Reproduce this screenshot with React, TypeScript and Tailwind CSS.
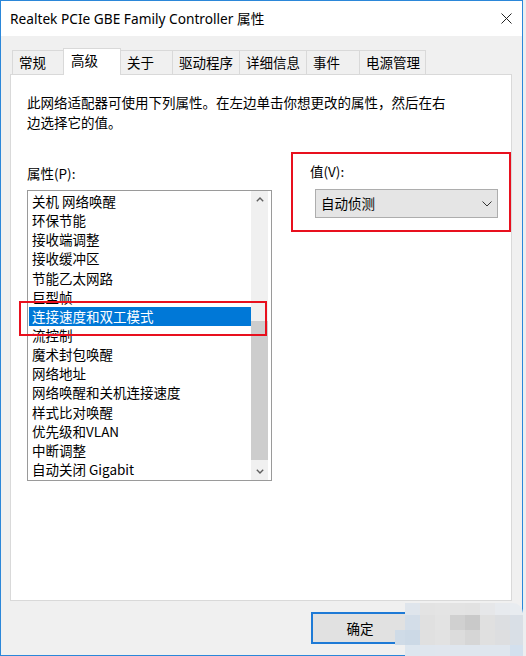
import React from "react";

const items = [
  "关机 网络唤醒",
  "环保节能",
  "接收端调整",
  "接收缓冲区",
  "节能乙太网路",
  "巨型帧",
  "连接速度和双工模式",
  "流控制",
  "魔术封包唤醒",
  "网络地址",
  "网络唤醒和关机连接速度",
  "样式比对唤醒",
  "优先级和VLAN",
  "中断调整",
  "自动关闭 Gigabit",
];

// tabs: label, width, left padding
const tabs = [
  { label: "常规", w: "w-[51px]" },
  { label: "高级", w: "w-[58px]", active: true },
  { label: "关于", w: "w-[51px]" },
  { label: "驱动程序", w: "w-[67px]" },
  { label: "详细信息", w: "w-[67px]" },
  { label: "事件", w: "w-[53px]" },
  { label: "电源管理", w: "w-[67px]", last: true },
];

// mosaic that hides the second button
const mosaic = [
  { h: "h-[12px]", cells: ["bg-transparent", "bg-[#dfe5ec]", "bg-[#e3e3e3]", "bg-[#e4e4e4]", "bg-[#e3e3e3]", "bg-[#e2e2e2]", "bg-[#e6e7e9]", "bg-[#e7eaee]", "bg-[#e8ecf0]"] },
  { h: "h-[15px]", cells: ["bg-transparent", "bg-[#d3dde8]", "bg-[#e0e0e0]", "bg-[#e3e3e3]", "bg-[#d0d0d0]", "bg-[#c9c9c9]", "bg-[#e0e0e0]", "bg-[#dcdee1]", "bg-[#d9dfe6]"] },
  { h: "h-[15px]", cells: ["bg-[#cfdbe7]", "bg-[#ccd9e6]", "bg-[#e0e0e0]", "bg-[#e2e2e2]", "bg-[#dcdcdc]", "bg-[#d6d6d6]", "bg-[#e0e0e0]", "bg-[#dddee0]", "bg-[#d9dfe6]"] },
  { h: "h-[11px]", cells: ["bg-transparent", "bg-[#dde6ef]", "bg-[#dfe6ee]", "bg-[#e0e6ee]", "bg-[#dfe6ee]", "bg-[#dfe6ee]", "bg-[#dfe6ee]", "bg-[#dfe6ee]", "bg-[#d3e0ee]"] },
];
const cellW = ["w-[10px]", "w-[15px]", "w-[15px]", "w-[15px]", "w-[15px]", "w-[15px]", "w-[15px]", "w-[15px]", "w-[13px]"];

const Chevron = ({ up }: { up?: boolean }) => (
  <svg width="8" height="5" viewBox="0 0 8 5">
    <path
      d={up ? "M0.8 4.2L4 1L7.2 4.2" : "M0.8 0.8L4 4L7.2 0.8"}
      fill="none"
      stroke="#606060"
      strokeWidth="1.4"
    />
  </svg>
);

const App = () => {
  return (
    <div className="relative w-[526px] h-[656px] overflow-hidden bg-[#eceef0] font-['Noto_Sans','Noto_Sans_CJK_SC',sans-serif] text-black">
      <div className="w-[523px] h-[656px] border border-[#2b87d9] bg-[#f0f0f0] flex flex-col">
        {/* title bar */}
        <div className="h-[35px] bg-white flex items-center justify-between pl-[9px] pr-[10px] shrink-0">
          <span className="text-[13.7px] leading-none">Realtek PCIe GBE Family Controller 属性</span>
          <svg width="11" height="11" viewBox="0 0 11 11">
            <path d="M0.5 0.5L10.5 10.5M10.5 0.5L0.5 10.5" stroke="#222" strokeWidth="1" />
          </svg>
        </div>

        {/* tabs */}
        <div className="relative z-10 mt-[12px] ml-[11px] h-[27px] flex items-start font-['Noto_Sans_CJK_SC',sans-serif] text-[13.5px]">
          {tabs.map((t, i) =>
            t.active ? (
              <div
                key={t.label}
                className={`${t.w} h-[27px] bg-white border-l border-t border-r border-[#d9d9d9] pl-[7px] pb-[3px] flex items-center`}
              >
                {t.label}
              </div>
            ) : (
              <div
                key={t.label}
                className={`${t.w} h-[24px] mt-[2px] bg-[#f0f0f0] border-t border-[#d9d9d9] pl-[6px] flex items-center ${
                  i === 2 ? "" : "border-l"
                } ${t.last ? "border-r" : ""}`}
              >
                {t.label}
              </div>
            )
          )}
        </div>

        {/* panel */}
        <div className="-mt-px ml-[9px] w-[502px] h-[527px] bg-white border border-[#d9d9d9] font-['Noto_Sans_CJK_SC',sans-serif] text-[13.5px]">
          <p className="pt-[17px] pl-[16px] leading-[20px] whitespace-nowrap">
            此网络适配器可使用下列属性。在左边单击你想更改的属性，然后在右
            <br />
            边选择它的值。
          </p>

          <div className="mt-[20px] ml-[16px] flex items-start">
            {/* property list */}
            <div className="relative pt-[11px]">
              <div className="leading-[20px]">属性(P):</div>
              <div className="mt-[7px] w-[245px] h-[291px] border border-[#9a9a9a] flex pl-[1px] pr-[3px]">
                <ul className="w-[222px] leading-[19.15px] pt-px">
                  {items.map((it, i) => (
                    <li
                      key={it}
                      className={`h-[19.15px] pl-[3px] whitespace-nowrap ${
                        i === 6 ? "bg-[#0078d7] text-white" : ""
                      }`}
                    >
                      {it}
                    </li>
                  ))}
                </ul>
                <div className="w-[17px] bg-[#f0f0f0] flex flex-col">
                  <div className="h-[17px] flex items-center justify-center">
                    <Chevron up />
                  </div>
                  <div className="h-[113px]" />
                  <div className="h-[139px] bg-[#cdcdcd]" />
                  <div className="flex-1" />
                  <div className="h-[17px] flex items-center justify-center">
                    <Chevron />
                  </div>
                </div>
              </div>
              {/* annotation around the selected row */}
              <div className="absolute left-[-8px] top-[149px] w-[248px] h-[35px] border-2 border-[#e8101e]" />
            </div>

            {/* value */}
            <div className="ml-[19px] w-[221px] h-[80px] border-2 border-[#e8101e] pl-[17px] pt-[7px]">
              <div className="leading-[20px]">值(V):</div>
              <div className="mt-[8px] ml-[5px] w-[183px] h-[29px] bg-[#e5e5e5] border border-[#adadad] flex items-center justify-between pl-[5px] pr-[5px]">
                <span>自动侦测</span>
                <svg width="10" height="6" viewBox="0 0 10 6">
                  <path d="M0.5 0.5L5 5L9.5 0.5" fill="none" stroke="#333" strokeWidth="1" />
                </svg>
              </div>
            </div>
          </div>
        </div>

        {/* buttons */}
        <div className="mt-[11px] ml-[310px] flex">
          <button className="w-[98px] h-[32px] bg-[#e1e1e1] border-2 border-[#1e7ad6] font-['Noto_Sans_CJK_SC',sans-serif] text-[13.5px]">
            确定
          </button>
        </div>
      </div>

      {/* pixelated watermark */}
      <div className="absolute left-[395px] top-[603px] flex flex-col rounded-t-[10px] overflow-hidden">
        {mosaic.map((row, r) => (
          <div key={r} className={`flex ${row.h}`}>
            {row.cells.map((c, j) => (
              <div key={j} className={`${cellW[j]} ${c}`} />
            ))}
          </div>
        ))}
      </div>
    </div>
  );
};

export default App;
